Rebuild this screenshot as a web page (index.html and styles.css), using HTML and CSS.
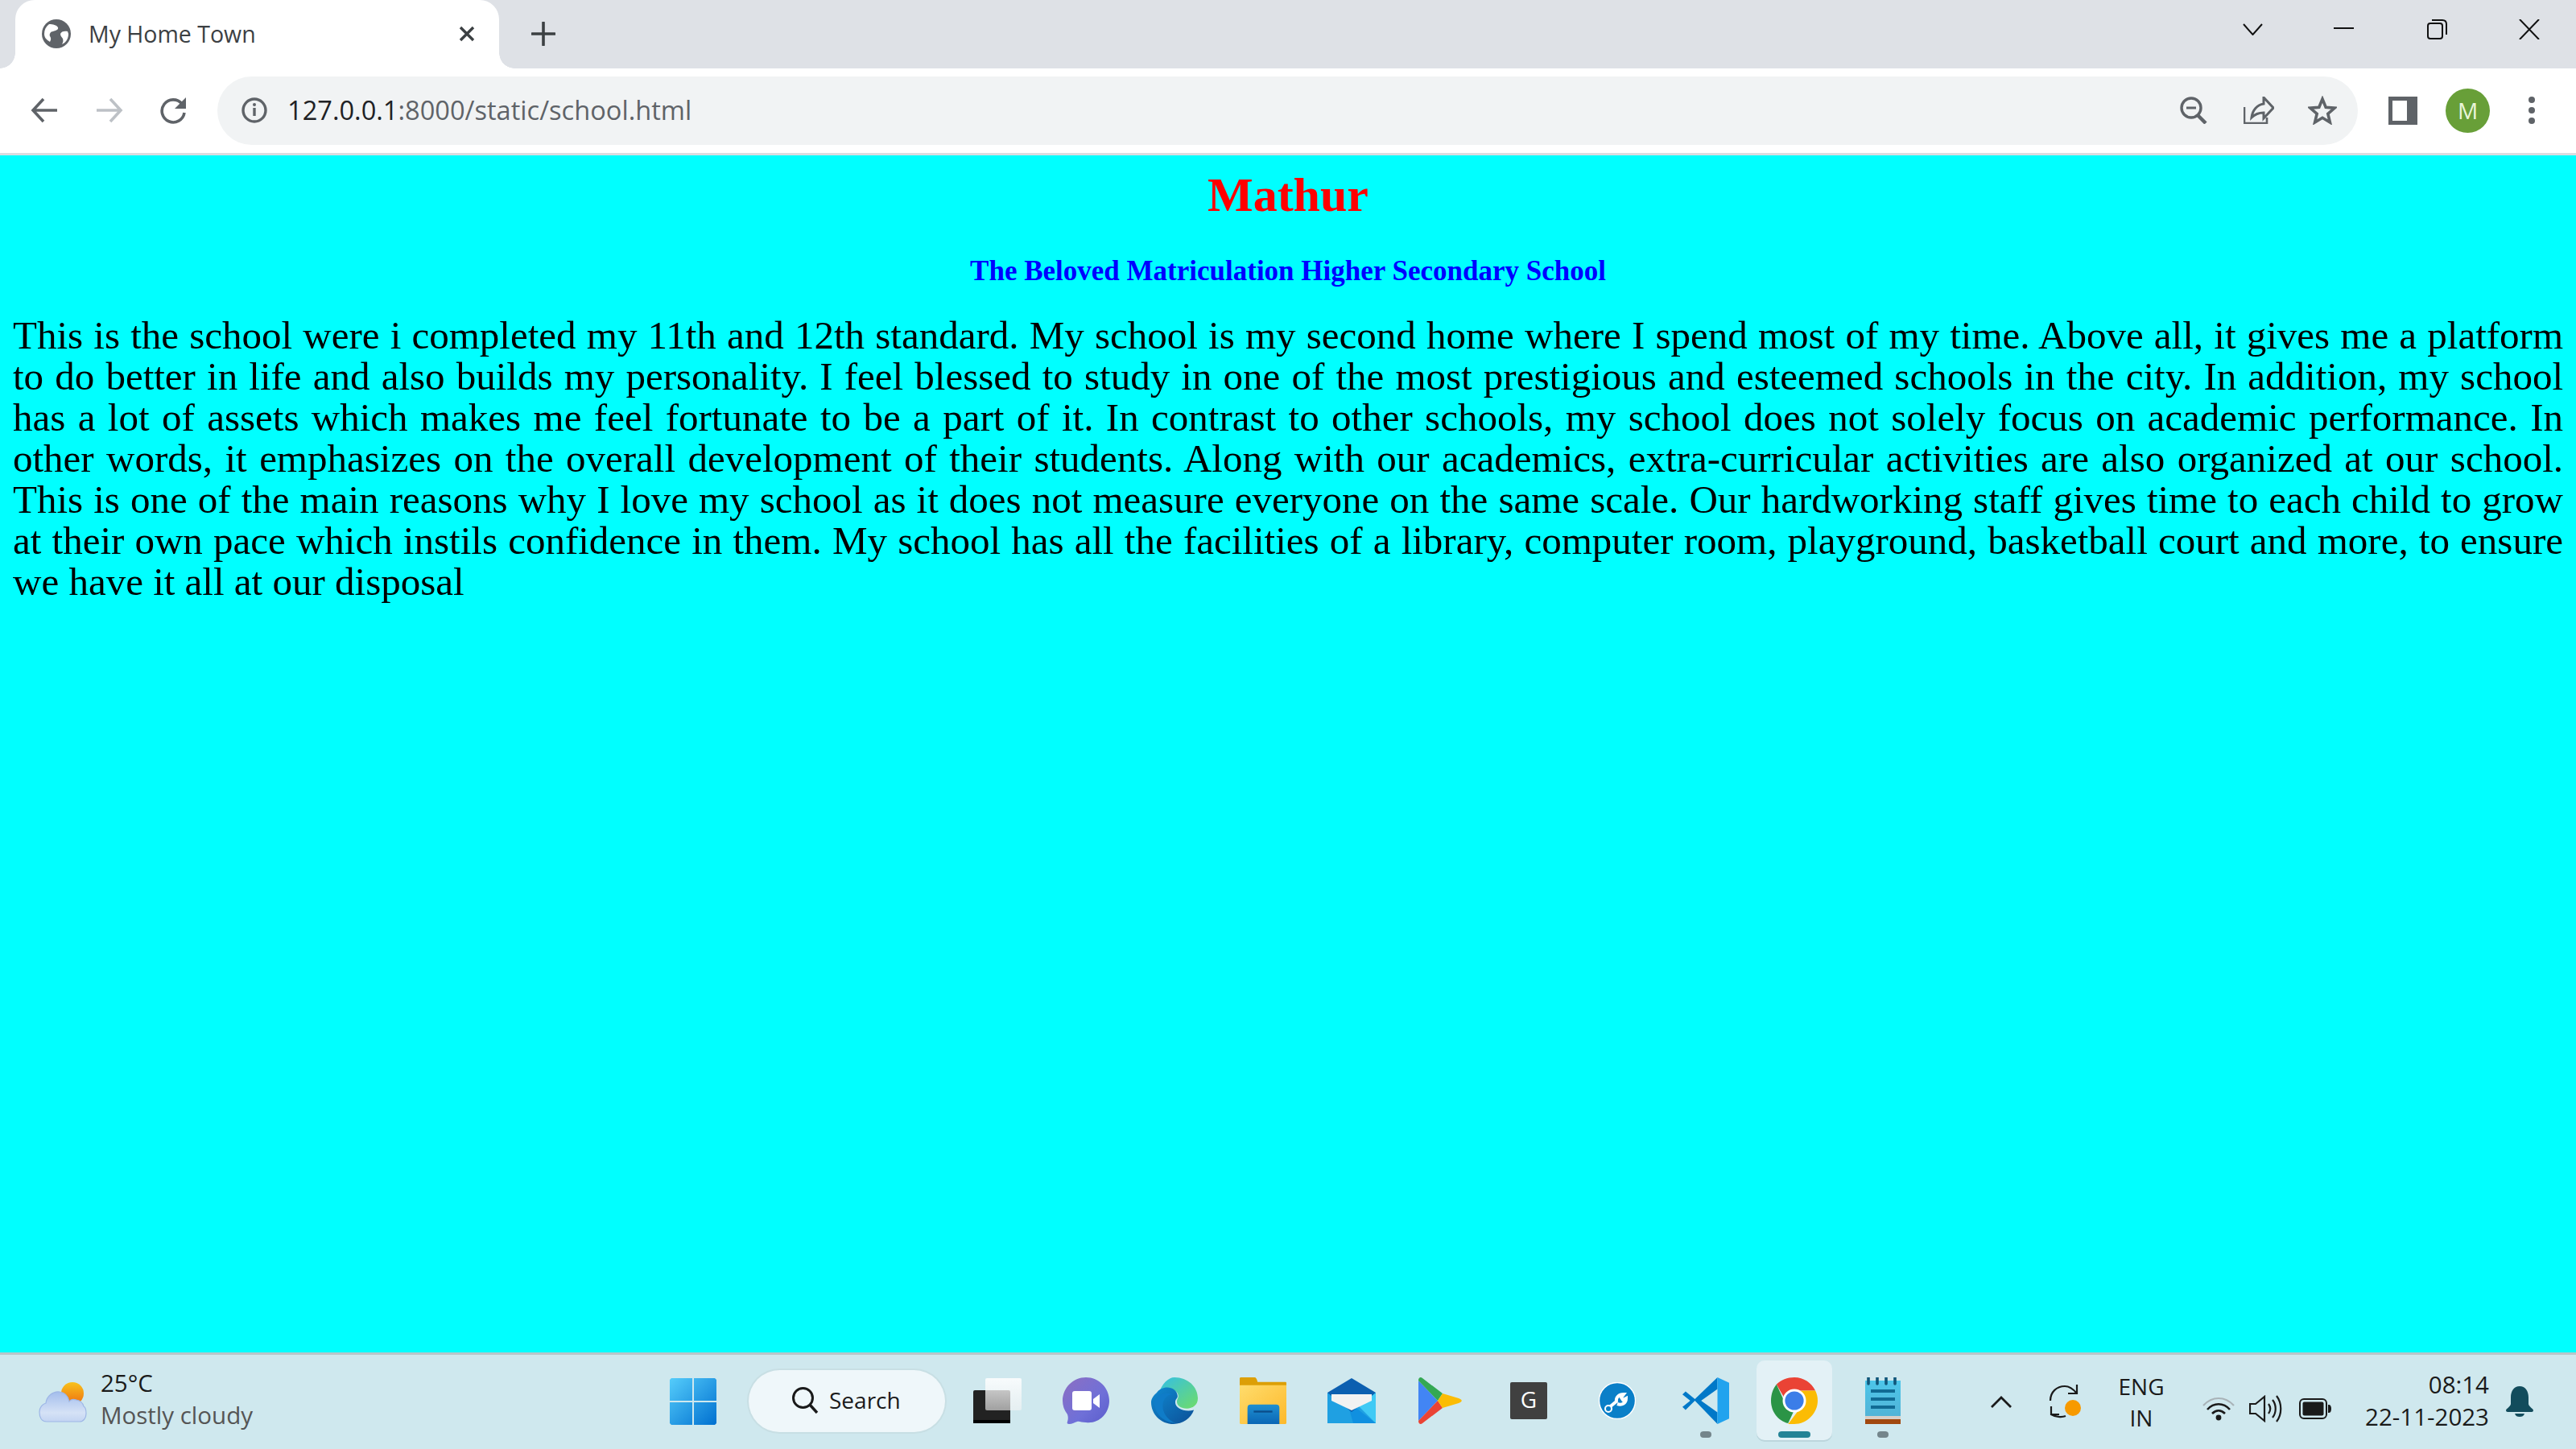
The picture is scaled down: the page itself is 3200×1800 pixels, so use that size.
FILE: index.html
```html
<!DOCTYPE html>
<html lang="en">
<head>
<meta charset="utf-8">
<title>My Home Town</title>
<link rel="stylesheet" href="styles.css">
</head>
<body>
<div class="window">
  <header class="tabstrip">
    <div class="tab">
      <svg class="tab-globe" viewBox="0 0 36 36"><circle cx="18" cy="18" r="18" fill="#5f6368"/><path d="M9 6c5 0 9 1 11 4 1 3-3 4-6 5-3 0-5 3-4 6 2 3 1 5 0 7-5-3-7-6-7-10 0-5 2-9 6-12zM32 15c-4-1-8 0-9 3 0 3 2 4 3 6 1 3 0 5-1 7 5-2 8-7 8-13l-1-3z" fill="#fff"/></svg>
      <span class="tab-title">My Home Town</span>
      <svg class="tab-close" viewBox="0 0 20 20"><path d="M2 2l16 16M18 2L2 18" stroke="#3c4043" stroke-width="3.400" fill="none"/></svg>
    </div>
    <svg class="new-tab" viewBox="0 0 30 30"><path d="M15 1v28M1 15h28" stroke="#3c4043" stroke-width="3.600" stroke-linecap="round"/></svg>
    <div class="window-controls">
      <svg class="wc-chevron" viewBox="0 0 25 15"><path d="M1 1l11.500 13L24 1" stroke="#111" stroke-width="2" fill="none"/></svg>
      <svg class="wc-min" viewBox="0 0 25 4"><path d="M0 2h25" stroke="#111" stroke-width="2"/></svg>
      <svg class="wc-restore" viewBox="0 0 25 25"><rect x="1" y="5" width="18" height="19" rx="3" fill="none" stroke="#111" stroke-width="2"/><path d="M6 1h13c3 0 5 2 5 5v13" fill="none" stroke="#111" stroke-width="2"/></svg>
      <svg class="wc-close" viewBox="0 0 26 25"><path d="M1 0l24 25M25 0L1 25" stroke="#111" stroke-width="2" fill="none"/></svg>
    </div>
  </header>

  <nav class="toolbar">
    <svg class="nav-icon nav-back" viewBox="0 0 34 32"><path d="M16 2L3 16l13 14M3 16h30" stroke="#5f6368" stroke-width="3.600" fill="none"/></svg>
    <svg class="nav-icon nav-forward" viewBox="0 0 34 32"><path d="M18 2l13 14-13 14M31 16H1" stroke="#bdc1c6" stroke-width="3.600" fill="none"/></svg>
    <svg class="nav-icon nav-reload" viewBox="0 0 34 34"><path d="M28 9A14 14 0 1 0 31 20" stroke="#5f6368" stroke-width="3.600" fill="none"/><path d="M33 1v14H19z" fill="#5f6368"/></svg>
    <div class="omnibox">
      <svg class="info" viewBox="0 0 32 32"><circle cx="16" cy="16" r="14" fill="none" stroke="#5f6368" stroke-width="3.400"/><path d="M16 13v10" stroke="#5f6368" stroke-width="3.400"/><circle cx="16" cy="9" r="2" fill="#5f6368"/></svg>
      <span class="url"><span class="url-host">127.0.0.1</span>:8000/static/school.html</span>
      <svg class="omni-zoom" viewBox="0 0 34 34"><circle cx="14" cy="14" r="12" fill="none" stroke="#5f6368" stroke-width="3.400"/><path d="M8 14h12" stroke="#5f6368" stroke-width="3"/><path d="M22 23l10 10" stroke="#5f6368" stroke-width="4.500"/></svg>
      <svg class="omni-share" viewBox="0 0 38 34"><path d="M1 13v20h28v-7" fill="none" stroke="#5f6368" stroke-width="2.600"/><path d="M25 1l12 13-12 13v-7c-6 0-10 1-15 6 1-9 7-16 15-17z" fill="none" stroke="#5f6368" stroke-width="3"/></svg>
      <svg class="omni-star" viewBox="0 0 36 36"><path d="M18 4l4.200 10.200 11 .9-8.400 7.200 2.600 10.700L18 27.300 8.600 33l2.600-10.700-8.400-7.200 11-.9z" fill="none" stroke="#5f6368" stroke-width="3.600"/></svg>
    </div>
    <svg class="side-panel" viewBox="0 0 36 35"><rect width="36" height="35" fill="#5f6368"/><rect x="5" y="5" width="18" height="25" fill="#fff"/></svg>
    <div class="avatar">M</div>
    <svg class="menu-dots" viewBox="0 0 8 34"><circle cx="4" cy="4" r="4" fill="#5f6368"/><circle cx="4" cy="17" r="4" fill="#5f6368"/><circle cx="4" cy="30" r="4" fill="#5f6368"/></svg>
  </nav>

  <main class="page">
    <h1 class="page-title">Mathur</h1>
    <h3 class="page-subtitle">The Beloved Matriculation Higher Secondary School</h3>
    <p class="page-text"><span class="text-line">This is the school were i completed my 11th and 12th standard. My school is my second home where I spend most of my time. Above all, it gives me a platform</span> <span class="text-line">to do better in life and also builds my personality. I feel blessed to study in one of the most prestigious and esteemed schools in the city. In addition, my school</span> <span class="text-line">has a lot of assets which makes me feel fortunate to be a part of it. In contrast to other schools, my school does not solely focus on academic performance. In</span> <span class="text-line">other words, it emphasizes on the overall development of their students. Along with our academics, extra-curricular activities are also organized at our school.</span> <span class="text-line">This is one of the main reasons why I love my school as it does not measure everyone on the same scale. Our hardworking staff gives time to each child to grow</span> <span class="text-line">at their own pace which instils confidence in them. My school has all the facilities of a library, computer room, playground, basketball court and more, to ensure</span> <span class="text-last">we have it all at our disposal</span></p>
  </main>

  <footer class="taskbar">
    <div class="weather">
      <svg class="weather-icon" viewBox="0 0 60 50">
        <defs>
          <linearGradient id="sun" x1="0" y1="0" x2="0" y2="1"><stop offset="0" stop-color="#f8c21c"/><stop offset="1" stop-color="#ee6f10"/></linearGradient>
          <linearGradient id="cloud" x1="0" y1="0" x2="0" y2="1"><stop offset="0" stop-color="#a3bdec"/><stop offset=".7" stop-color="#d5e2f6"/><stop offset="1" stop-color="#c3d4f2"/></linearGradient>
        </defs>
        <circle cx="42" cy="14" r="14" fill="url(#sun)"/>
        <path d="M10 49C3 49 1 43 1 37c0-6 4-10 8-11 1-9 9-15 17-14 7 1 11 6 12 12 2-3 6-3 9-2 5 1 8 4 9 8 2 1 3 5 3 9 0 5-3 10-8 10z" fill="url(#cloud)" stroke="#9db6e6" stroke-width="1.200"/>
      </svg>
      <div class="weather-text">
        <span class="weather-temp">25°C</span>
        <span class="weather-desc">Mostly cloudy</span>
      </div>
    </div>

    <div class="task-center">
      <svg class="start" viewBox="0 0 58 58">
        <defs><linearGradient id="win" x1="0" y1="0" x2="1" y2="1"><stop offset="0" stop-color="#55cdfb"/><stop offset="1" stop-color="#0070d0"/></linearGradient></defs>
        <path d="M2 0h26v28H0V2zM30 0h26l2 2v26H30zM0 30h28v28H2l-2-2zM30 30h28v26l-2 2H30z" fill="url(#win)"/>
      </svg>
      <div class="search-pill">
        <svg class="search-icon" viewBox="0 0 34 34"><circle cx="14.500" cy="14.500" r="12" fill="none" stroke="#1a1a1a" stroke-width="3"/><path d="M23 23l9 10" stroke="#1a1a1a" stroke-width="3.400"/></svg>
        <span>Search</span>
      </div>
      <div class="task-apps">
        <div class="app"><svg class="app-icon" viewBox="0 0 60 56"><defs><linearGradient id="tv" x1="0" y1="0" x2="0" y2="1"><stop offset="0" stop-color="#fff" stop-opacity=".85"/><stop offset="1" stop-color="#f4f4f4" stop-opacity=".6"/></linearGradient></defs><rect y="15" width="46" height="41" rx="2" fill="#222"/><rect y="52" width="46" height="4" fill="#000"/><rect x="15" width="45" height="40" rx="2" fill="url(#tv)"/></svg></div>
        <div class="app"><svg class="app-icon" viewBox="0 0 58 58">
          <defs><linearGradient id="teams" x1="0" y1="0" x2="1" y2="1"><stop offset="0" stop-color="#8d6fc2"/><stop offset=".6" stop-color="#6f70d8"/><stop offset="1" stop-color="#5a5ccb"/></linearGradient></defs>
          <path d="M29 0c16 0 29 13 29 29S45 58 29 56c-6 0-8-2-11-1-4 1-6 3-10 3-2 0-3-1-2-3 1-3 1-6 0-9C2 41 0 35 0 29 0 13 13 0 29 0z" fill="url(#teams)"/>
          <rect x="12" y="17" width="24" height="24" rx="3" fill="#fff"/><path d="M38 27l8-6v17l-8-6z" fill="#fff"/>
        </svg></div>
        <div class="app"><svg class="app-icon" viewBox="0 0 60 60">
          <defs><linearGradient id="edgeA" x1="0" y1="0" x2="1" y2="1"><stop offset="0" stop-color="#33bfe8"/><stop offset="1" stop-color="#6fdc68"/></linearGradient><linearGradient id="edgeB" x1="0" y1="0" x2="1" y2="1"><stop offset="0" stop-color="#0f8ad2"/><stop offset="1" stop-color="#0c4f96"/></linearGradient></defs>
          <path d="M30 0c17 0 30 12 30 27 0 9-7 13-14 13-8 0-13-4-13-9 0-3 2-4 2-7C35 15 18 10 9 22 14 8 22 0 30 0z" fill="url(#edgeA)"/>
          <path d="M7 20C14 9 33 11 34 24c0 3-3 4-3 8 0 8 12 13 24 10-4 11-15 18-26 18C12 60 0 47 0 32c0-4 3-9 7-12z" fill="url(#edgeB)"/>
          <path d="M28 22c-9 0-14 8-13 17s8 17 17 20C16 58 5 47 4 34c0-7 9-17 24-12z" fill="#0f7cc8"/>
        </svg></div>
        <div class="app"><svg class="app-icon" viewBox="0 0 60 60">
          <defs><linearGradient id="folder" x1="0" y1="0" x2="1" y2="1"><stop offset="0" stop-color="#ffdc6c"/><stop offset="1" stop-color="#fdb92b"/></linearGradient><linearGradient id="clip" x1="0" y1="0" x2="0" y2="1"><stop offset="0" stop-color="#1f8fd0"/><stop offset="1" stop-color="#0a66b5"/></linearGradient></defs>
          <path d="M1 0h18c2 0 3 2 4 6h36c1 0 1 1 1 2v4H0V1z" fill="#dc9f06"/>
          <path d="M0 10h60v49l-1 1H1l-1-1z" fill="url(#folder)"/>
          <path d="M10 60V39c0-3 2-4 4-4h33c2 0 4 1 4 4v21z" fill="url(#clip)"/><path d="M18 44h24" stroke="#0b4d8a" stroke-width="2.400"/>
        </svg></div>
        <div class="app"><svg class="app-icon" viewBox="0 0 60 56">
          <path d="M30 0l30 18H0z" fill="#0c5fb0"/>
          <path d="M0 18h60v38H0z" fill="#1fa0e2"/>
          <path d="M60 18v38L34 30z" fill="#40caf5"/>
          <path d="M24 28l36 28H32z" fill="#1090e0"/>
          <path d="M0 18h60L30 42z" fill="#0c5fb0"/>
          <path d="M5 20h50v8L30 40 5 28z" fill="#f2f2f2"/>
        </svg></div>
        <div class="app"><svg class="app-icon" viewBox="0 0 54 58">
          <path d="M0 4v50l24-25z" fill="#4285f4"/><path d="M0 4c0-4 3-5 5-3l25 19-6 9z" fill="#34a853"/><path d="M0 54c0 4 3 5 5 3l25-19-6-9z" fill="#ea4335"/><path d="M30 20l20 6c5 2 5 4 0 6l-20 6-6-9z" fill="#fbbc04"/>
        </svg></div>
        <div class="app"><svg class="app-icon app-g" viewBox="0 0 46 46"><rect width="46" height="46" rx="2" fill="#404040"/><text class="g-letter" x="23" y="32" text-anchor="middle">G</text></svg></div>
        <div class="app"><svg class="app-icon app-tool" viewBox="0 0 46 46"><circle cx="23" cy="23" r="22.500" fill="#0a7fc8" stroke="#fff" stroke-width="1.400"/><path d="M11 33l12-10M22 24c-1-5 3-9 9-9l-3 4 2 3 4-2c0 6-5 9-11 7" stroke="#fff" stroke-width="4" fill="none"/><circle cx="12" cy="33" r="4" fill="#0a7fc8" stroke="#fff" stroke-width="2"/></svg></div>
        <div class="app app-open"><svg class="app-icon" viewBox="0 0 60 60">
          <path d="M45 0L16 28 4 18 0 22l10 8-10 8 4 4 12-12 29 30V45L24 30 45 15z" fill="#0078c8"/><path d="M45 0l15 7v46l-15 7z" fill="#21a3ee"/>
        </svg></div>
        <div class="app app-active app-open-wide"><svg class="app-icon" viewBox="0 0 60 60">
          <path d="M30 0c12 0 22 7 27 17H30c-6 0-11 4-13 9L7 9C13 3 21 0 30 0z" fill="#ea4335"/>
          <path d="M7 9l12 26c2 4 6 7 11 7l-8 17C9 56 0 44 0 30 0 21 3 14 7 9z" fill="#2b9446"/>
          <path d="M57 17c2 4 3 8 3 13 0 16-14 30-30 30h-8l15-20c4-4 4-11 1-23z" fill="#fbbc04"/>
          <circle cx="30" cy="30" r="15" fill="#fff"/><circle cx="30" cy="30" r="12" fill="#3b7de8"/>
        </svg></div>
        <div class="app app-open"><svg class="app-icon" viewBox="0 0 44 58">
          <defs><linearGradient id="note" x1="0" y1="0" x2="0" y2="1"><stop offset="0" stop-color="#4cc6ea"/><stop offset="1" stop-color="#52b3d6"/></linearGradient></defs>
          <rect y="4" width="44" height="46" fill="url(#note)"/>
          <path d="M4 0v8M15 0v8M26 0v8M37 0v8" stroke="#10567a" stroke-width="3.600" stroke-linecap="round"/>
          <path d="M7 17h30M7 27h30M7 37h30" stroke="#116b94" stroke-width="4"/>
          <rect y="48" width="44" height="4" fill="#d8cfc8"/><rect y="52" width="44" height="6" fill="#a1480f"/>
        </svg></div>
      </div>
    </div>

    <div class="tray">
      <svg class="tray-caret" viewBox="0 0 28 16"><path d="M2 14L14 2l12 12" stroke="#1a1a1a" stroke-width="2.800" fill="none"/></svg>
      <svg class="tray-sync" viewBox="0 0 42 42"><path d="M2 20C2 9 10 2 20 2c6 0 10 3 15 9M35 0v11H24M3 27v10h10M3 37c5 3 13 4 18 2" stroke="#1a1a1a" stroke-width="2.200" fill="none"/><circle cx="30" cy="29" r="10" fill="#f79a00"/></svg>
      <div class="tray-lang"><span>ENG</span><span>IN</span></div>
      <svg class="tray-wifi" viewBox="0 0 40 30"><path d="M1 11c11-12 27-12 38 0" stroke="#a9b3b8" stroke-width="2.200" fill="none"/><path d="M6 16c8-9 20-9 28 0M12 21c5-5 11-5 16 0" stroke="#1a1a1a" stroke-width="2.600" fill="none"/><circle cx="20" cy="26" r="3.400" fill="#1a1a1a"/></svg>
      <svg class="tray-volume" viewBox="0 0 42 34"><path d="M1 11h7l11-9v30l-11-9H1z" fill="none" stroke="#1a1a1a" stroke-width="2.200"/><path d="M24 11c3 4 3 8 0 12M29 6c5 6 5 16 0 22M34 1c7 9 7 23 0 32" fill="none" stroke="#1a1a1a" stroke-width="2.200"/></svg>
      <svg class="tray-battery" viewBox="0 0 40 26"><rect x="1" y="1" width="33" height="24" rx="5" fill="none" stroke="#1a1a1a" stroke-width="2"/><rect x="4.500" y="4.500" width="26" height="17" rx="2" fill="#1a1a1a"/><path d="M36 8h1c2 0 3 2 3 5s-1 5-3 5h-1z" fill="#1a1a1a"/></svg>
      <div class="tray-clock"><span>08:14</span><span>22-11-2023</span></div>
      <svg class="tray-bell" viewBox="0 0 34 38"><path d="M17 0c7 0 11 6 11 14v8c0 3 6 6 6 8 0 1-1 2-2 2H2c-1 0-2-1-2-2 0-2 6-5 6-8v-8C6 6 10 0 17 0z" fill="#124c5c"/><path d="M11 34h12c-1 3-3 4-6 4s-5-1-6-4z" fill="#124c5c"/></svg>
    </div>
  </footer>
</div>
</body>
</html>
```

FILE: styles.css
```css
* { box-sizing: border-box; }
html, body { margin: 0; height: 100%; }
body { overflow: hidden; background: #0ff; }
svg { display: block; flex: none; }

.window { display: flex; flex-direction: column; height: 1800px; width: 3200px; }

/* Tab strip */
.tabstrip { display: flex; align-items: flex-start; height: 85px; background: #dee1e6; padding-left: 19px; }
.tab { position: relative; display: flex; align-items: center; width: 601px; height: 85px; background: #fff; border-radius: 24px 24px 0 0; padding-left: 33px; }
.tab::before, .tab::after { content: ""; position: absolute; bottom: 0; width: 19px; height: 19px; background: radial-gradient(circle at 0 0, #dee1e6 18.500px, #fff 19px); }
.tab::before { left: -19px; }
.tab::after { right: -19px; background: radial-gradient(circle at 100% 0, #dee1e6 18.500px, #fff 19px); }
.tab-globe { width: 36px; height: 36px; margin-top: -2px; }
.tab-title { margin-left: 22px; font: 28.500px/1 "Open Sans", sans-serif; color: #3c4043; width: 460px; white-space: nowrap; }
.tab-close { width: 20px; height: 20px; margin-top: -1px; }
.new-tab { width: 30px; height: 30px; margin: 27px 0 0 40px; }
.window-controls { display: flex; margin-left: auto; }
.wc-chevron { width: 25px; height: 15px; margin: 29px 0 0 0; }
.wc-min { width: 25px; height: 4px; margin: 33px 0 0 88px; }
.wc-restore { width: 25px; height: 25px; margin: 24px 0 0 91px; }
.wc-close { width: 26px; height: 25px; margin: 24px 45px 0 89px; }

/* Toolbar */
.toolbar { display: flex; align-items: center; height: 108px; padding: 0 0 1px 38px; background: #fff; border-bottom: 3px solid #dadce0; }
.nav-icon { width: 34px; height: 32px; }
.nav-reload { height: 34px; }
.nav-forward { margin-left: 47px; }
.nav-reload { margin-left: 45px; }
.omnibox { display: flex; align-items: center; width: 2659px; height: 85px; margin-left: 38px; padding: 0 26px 0 30px; background: #f1f3f4; border-radius: 43px; }
.info { width: 32px; height: 32px; }
.url { margin-left: 25px; font: 32.600px/1 "Open Sans", sans-serif; color: #5f6368; white-space: nowrap; }
.url-host { color: #202124; }
.omni-zoom { width: 34px; height: 34px; margin-left: auto; }
.omni-share { width: 38px; height: 34px; margin-left: 45px; }
.omni-star { width: 36px; height: 36px; margin-left: 42px; }
.side-panel { width: 36px; height: 35px; margin-left: 38px; }
.avatar { display: flex; align-items: center; justify-content: center; width: 55px; height: 55px; margin-left: 35px; border-radius: 50%; background: #689f38; color: #e9f5d8; font: 28px/1 "Open Sans", sans-serif; }
.menu-dots { width: 8px; height: 34px; margin-left: 48px; }

/* Page */
.page { flex: 1; padding: 0 16px; background: #0ff; font-family: "Liberation Serif", "Times New Roman", serif; }
.page-title { margin: 15px 0 0; font-size: 60px; line-height: 68px; font-weight: 700; text-align: center; color: #f00; }
.page-subtitle { margin: 41px 0 0; font-size: 35px; line-height: 40px; font-weight: 700; text-align: center; color: #00f; }
.page-text { margin: 34px 0 0; font-size: 49px; line-height: 51px; color: #000; }
.text-line { display: block; text-align: justify; text-align-last: justify; }
.text-last { display: block; }

/* Taskbar */
.taskbar { display: flex; align-items: flex-start; height: 120px; background: #cfe8ee; border-top: 3px solid #b7c6ca; position: relative; font-family: "Open Sans", sans-serif; color: #1a1a1a; }
.weather { display: flex; width: 832px; padding: 34px 0 0 48px; }
.weather-icon { width: 60px; height: 50px; }
.weather-text { display: flex; flex-direction: column; margin: -19px 0 0 17px; font-size: 29.500px; line-height: 40px; }
.weather-desc { color: #555; }
.task-center { display: flex; align-items: flex-start; }
.start { width: 58px; height: 58px; margin-top: 29px; }
.search-pill { display: flex; align-items: center; width: 244px; height: 77px; margin: 19px 0 0 40px; padding: 0 0 3px 53px; gap: 13px; border-radius: 39px; background: #eff7fa; box-shadow: 0 0 0 2px #c8dfe4; font-size: 28px; }
.search-icon { width: 34px; height: 34px; }
.task-apps { display: flex; margin-left: 10px; }
.app { position: relative; display: flex; align-items: center; justify-content: center; width: 110px; height: 99px; margin-top: 7px; }
.app-icon { height: 58px; width: 60px; margin-top: 0; }
.app-g, .app-tool { width: 46px; height: 46px; }
.app-active { width: 94px; margin: 7px 8px 0; border-radius: 10px; background: #e3f1f6; box-shadow: 0 2px 0 #bcd6dd; }
.app-open::after { content: ""; position: absolute; left: 50%; bottom: 3px; width: 14px; height: 8px; margin-left: -7px; border-radius: 4px; background: #74858b; }
.app-open-wide::after { content: ""; position: absolute; left: 50%; bottom: 3px; width: 40px; height: 8px; margin-left: -20px; border-radius: 4px; background: #248396; }
.g-letter { font: 28px "Open Sans", sans-serif; fill: #fff; }
.tray { position: absolute; top: 0; left: 2472px; right: 0; display: flex; align-items: flex-start; }
.tray-caret { width: 28px; height: 16px; margin: 51px 0 0 0; }
.tray-sync { width: 42px; height: 42px; margin: 37px 0 0 45px; }
.tray-lang { display: flex; flex-direction: column; align-items: center; width: 70px; margin: 20px 0 0 38px; font-size: 28px; line-height: 39px; }
.tray-wifi { width: 40px; height: 30px; margin: 52px 0 0 41px; }
.tray-volume { width: 42px; height: 34px; margin: 50px 0 0 18px; }
.tray-battery { width: 40px; height: 26px; margin: 54px 0 0 20px; }
.tray-clock { display: flex; flex-direction: column; align-items: flex-end; width: 196px; margin: 17px 0 0 0; font-size: 29.500px; line-height: 40px; }
.tray-bell { width: 34px; height: 38px; margin: 39px 0 0 21px; }
```
